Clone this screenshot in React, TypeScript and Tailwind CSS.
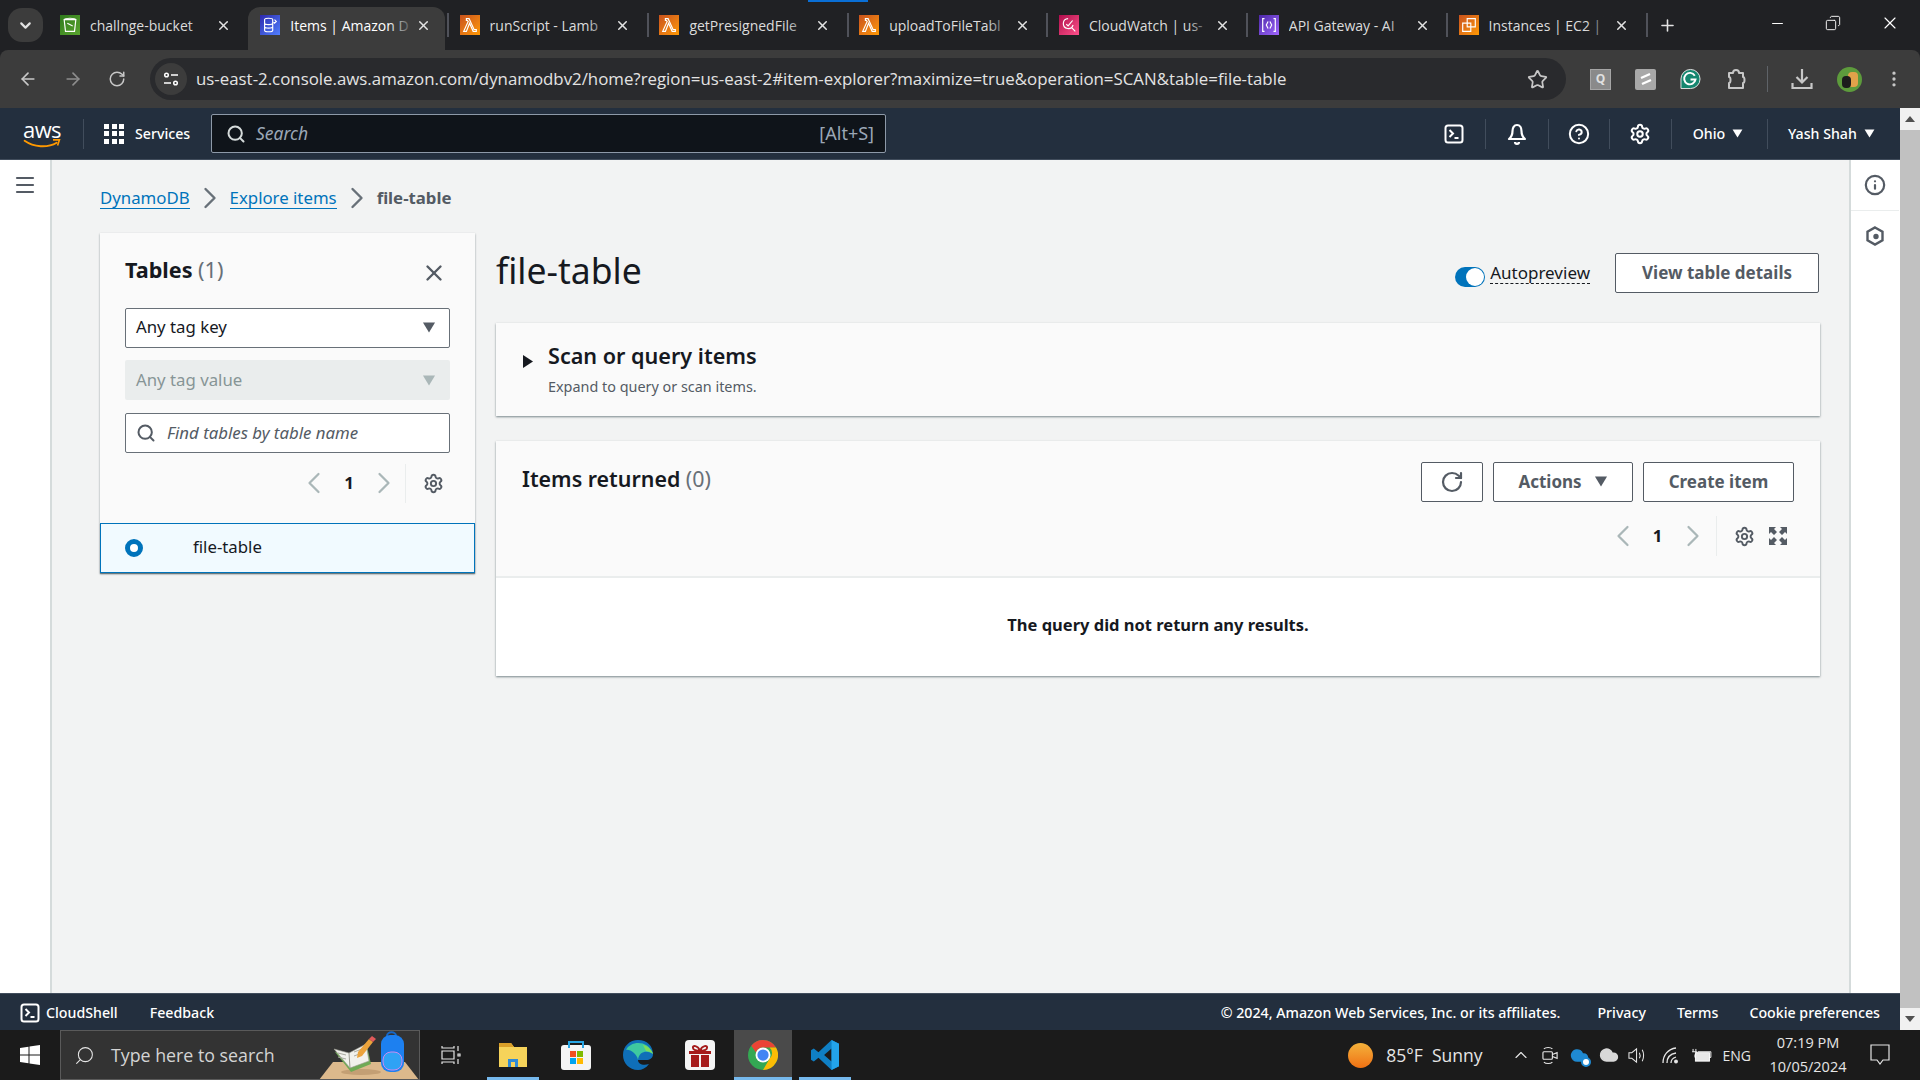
import React from "react";
import {
  ArrowLeft, ArrowRight, ChevronDown, ChevronLeft, ChevronRight, ChevronUp, Menu, Plus,
  RotateCw, Search, Settings, Star, X, CircleHelp, Info, Minus, Copy, Cloud,
  EllipsisVertical,
} from "lucide-react";

const CONSOLE_FONT = "font-['Noto_Sans',sans-serif]";

const Triangle = ({className}: {className: string}) => (
  <svg viewBox="0 0 12 10" className={className} fill="currentColor">
    <path d="M0.5 0.5h11L6 9.5z" />
  </svg>
);

const TerminalIcon = ({className}: {className: string}) => (
  <svg viewBox="0 0 20 20" className={className} fill="none" stroke="currentColor" strokeWidth="2">
    <rect x="1.5" y="1.5" width="17" height="17" rx="2.5" />
    <path d="M5.5 6l3.5 3.5-3.5 3.5M10.5 14h4" />
  </svg>
);

const Favicon = ({bg, kind}: {bg: string; kind: string}) => (
  <span className={`w-5 h-5 shrink-0 flex items-center justify-center ${bg}`}>
    <svg viewBox="0 0 20 20" className="w-[18px] h-[18px]" fill="none" stroke="white" strokeWidth="1.3">
      {kind === "lambda" && <path d="M6 3h3l5.500 12H17v2h-3.500L9.500 8 6 17H3l5-11-1-1H6z" />}
      {kind === "bucket" && <path d="M3.500 4h13l-1.500 13H5zM3.500 4c1-2 12-2 13 0M7 8l6 3" />}
      {kind === "db" && <path d="M4 4c0-2 9-2 9 0v12c0 2-9 2-9 0zM4 8c0 2 9 2 9 0M4 12c0 2 9 2 9 0M15 4l2 2-2 2-1-1" />}
      {kind === "watch" && <path d="M9 3a5.500 5.500 0 105.500 7M13 13l4 4M7 9l2 2 5-6" />}
      {kind === "api" && <path d="M5 3H3v14h2M15 3h2v14h-2M9 6L7 10l2 4M11 6l2 4-2 4" />}
      {kind === "ec2" && <path d="M8 3h9v9H8zM3 8h9v9H3z" />}
    </svg>
  </span>
);

const tabs = [
  {title: "challnge-bucket", bg: "bg-linear-to-br from-[#2f7a1c] to-[#5aa52f]", kind: "bucket"},
  {title: "Items | Amazon D", bg: "bg-linear-to-br from-[#2e27ad] to-[#527fff]", kind: "db", active: true},
  {title: "runScript - Lamb", bg: "bg-linear-to-br from-[#c8511b] to-[#ff9900]", kind: "lambda"},
  {title: "getPresignedFile", bg: "bg-linear-to-br from-[#c8511b] to-[#ff9900]", kind: "lambda"},
  {title: "uploadToFileTabl", bg: "bg-linear-to-br from-[#c8511b] to-[#ff9900]", kind: "lambda"},
  {title: "CloudWatch | us-", bg: "bg-linear-to-br from-[#b0084d] to-[#ff4f8b]", kind: "watch"},
  {title: "API Gateway - AI", bg: "bg-linear-to-br from-[#4d27a8] to-[#a166ff]", kind: "api"},
  {title: "Instances | EC2 |", bg: "bg-linear-to-br from-[#c8511b] to-[#ff9900]", kind: "ec2"},
];

const TabStrip = () => (
  <div className="h-[50px] bg-[#202124] flex items-end relative shrink-0 font-['Open_Sans',sans-serif]">
    <div className="absolute left-[808px] top-0 w-[60px] h-[2px] bg-[#0a6fd6]" />
    <div className="w-[47.5px] h-full flex items-start pt-2 pl-2 shrink-0">
      <div className="w-[35px] h-[34px] rounded-[14px] bg-[#3c3c3c] flex items-center justify-center text-[#e3e3e3]">
        <ChevronDown size={17} strokeWidth={3} />
      </div>
    </div>
    {tabs.map((t, i) => (
      <div
        key={t.title}
        className={`h-[43px] flex items-center gap-[10px] relative shrink-0 pb-[7px] ${t.active ? "ml-[1px] mr-[2px] w-[196.8px] pl-[12px] pr-[14px] rounded-t-[12px] bg-[#3c3c3c] text-white" : "w-[199.8px] pl-[12.5px] pr-[16.5px] text-[#dcdcdc]"} ${i > 1 ? "before:absolute before:left-0 before:top-[6px] before:w-[2px] before:h-[24px] before:bg-[#50525a]" : ""}`}
      >
        <Favicon bg={t.bg} kind={t.kind} />
        <div className="relative flex-1 -mr-[8px] overflow-hidden whitespace-nowrap text-[14px]">
          {t.title}
          <div className={`absolute right-0 top-0 bottom-0 w-[26px] bg-linear-to-r from-transparent ${t.active ? "to-[#3c3c3c]" : "to-[#202124]"}`} />
        </div>
        <X size={15} strokeWidth={2.4} className="shrink-0 text-[#e3e3e3]" />
      </div>
    ))}
    <div className="h-[43px] pb-[7px] pl-[12px] flex items-center text-[#e3e3e3] relative before:absolute before:left-0 before:top-[6px] before:w-[2px] before:h-[24px] before:bg-[#50525a]">
      <Plus size={19} />
    </div>
    <div className="ml-auto h-full flex items-center text-white pr-[20px] gap-[39px] pb-1">
      <Minus size={17} strokeWidth={1.4} />
      <Copy size={16} strokeWidth={1.4} className="-scale-x-100" />
      <X size={20} strokeWidth={1.4} />
    </div>
  </div>
);

const AddressBar = () => (
  <div className="h-[58px] bg-[#3c3c3c] rounded-t-[8px] flex items-center shrink-0 text-[#c7c7c7] font-['Open_Sans',sans-serif]">
    <div className="w-[150px] flex items-center shrink-0 pl-[18px] gap-[25px]">
      <ArrowLeft size={20} />
      <ArrowRight size={20} className="text-[#8d8d8d]" />
      <RotateCw size={18} />
    </div>
    <div className="w-[1416px] h-[42px] bg-[#292a2d] rounded-full flex items-center pl-[5px] pr-[18px] shrink-0">
      <div className="w-[32px] h-[32px] rounded-full bg-[#3c3c3c] flex items-center justify-center">
        <svg viewBox="0 0 16 16" className="w-4 h-4 text-white" fill="none" stroke="currentColor" strokeWidth="1.5">
          <circle cx="3.5" cy="4" r="1.8" />
          <path d="M8 4h7M1 12h7" />
          <circle cx="12.5" cy="12" r="1.8" />
        </svg>
      </div>
      <div className="ml-[9px] text-[16.85px] text-[#e3e3e3] whitespace-nowrap">
        us-east-2.console.aws.amazon.com/dynamodbv2/home?region=us-east-2#item-explorer?maximize=true&amp;operation=SCAN&amp;table=file-table
      </div>
      <Star size={21} className="ml-auto" />
    </div>
    <div className="flex items-center pl-[24px]">
      <span className="w-[21px] h-[21px] bg-[#8a8a8a] border border-[#a5a5a5] text-[#e0e0e0] text-[12px] font-bold flex items-center justify-center">Q</span>
      <span className="ml-[24px] w-[21px] h-[21px] rounded-[2px] bg-[#a8a8a8] flex items-center justify-center">
        <svg viewBox="0 0 14 14" className="w-[14px] h-[14px]" fill="none" stroke="white" strokeWidth="2.4">
          <path d="M2 6l9-4M3 12l9-4" />
        </svg>
      </span>
      <svg viewBox="0 0 22 22" className="ml-[24px] w-[21px] h-[22px]">
        <path d="M11 1a10 10 0 110 20H1v-10A10 10 0 0111 1z" fill="#15866f" stroke="#e8e8e8" strokeWidth="1" />
        <path d="M15.500 7.500a6 6 0 10.800 4H11" fill="none" stroke="white" strokeWidth="2" />
      </svg>
      <svg viewBox="0 0 20 22" className="ml-[25px] w-5 h-[22px]" fill="none" stroke="currentColor" strokeWidth="2">
        <path d="M3 5h4c0-4 6-4 6 0h4v4c2 0 2 6 0 6v5H3v-5c2 0 2-6 0-6z" strokeLinejoin="round" />
      </svg>
      <span className="ml-[21px] w-px h-[26px] bg-[#5f6368]" />
      <svg viewBox="0 0 22 22" className="ml-[23px] w-[22px] h-[22px]" fill="none" stroke="currentColor" strokeWidth="2.2">
        <path d="M11 1v13M5.500 9l5.500 5.500L16.500 9M1.500 15v5h19v-5" />
      </svg>
      <span className="ml-[24px] w-[25px] h-[25px] rounded-full bg-[#5d9b3c] overflow-hidden relative">
        <span className="absolute left-[11px] top-[5px] w-[10px] h-[15px] rounded-[4px] bg-[#e2a24a]" />
        <span className="absolute left-[5px] top-[9px] w-[9px] h-[12px] rounded-[4px] bg-[#1c1c1c]" />
      </span>
      <EllipsisVertical size={20} className="ml-[22px]" />
    </div>
  </div>
);

const NavDivider = () => <span className="w-px h-[30px] bg-[#414d5c]" />;

const TopNav = () => (
  <div className={`h-[52px] bg-[#232f3e] border-b border-b-[#414d5c] flex items-center shrink-0 text-white text-[14.2px] ${CONSOLE_FONT}`}>
    <div className="w-[83px] flex justify-center pl-[1px] shrink-0">
      <div className="relative w-[40px] h-[32px]">
        <div className="text-[22px] leading-[22px] text-center tracking-[-0.6px] font-['Open_Sans',sans-serif]">aws</div>
        <svg viewBox="0 0 40 12" className="absolute left-0 bottom-0 w-[40px] h-[11px]" fill="none">
          <path d="M1 2c10 7 25 8 35 2" stroke="#ff9900" strokeWidth="2" strokeLinecap="round" />
          <path d="M32 1l7 0-2 6" stroke="#ff9900" strokeWidth="1.8" />
        </svg>
      </div>
    </div>
    <NavDivider />
    <div className="grid grid-cols-3 gap-[2.5px] ml-5 w-[20px] shrink-0">
      {Array.from({length: 9}).map((_, i) => (
        <span key={i} className="w-[5px] h-[5px] bg-white" />
      ))}
    </div>
    <div className="ml-[11px] w-[76px] font-medium mt-[1px]">Services</div>
    <div className="w-[675px] h-[39px] bg-[#0f141a] border border-[#8d99a8] rounded-[2px] flex items-center pl-[14px] pr-[11px] text-[#9ba7b6]">
      <Search size={20} strokeWidth={2.4} className="text-[#d5dbdb]" />
      <span className="ml-[10px] italic text-[17.5px]">Search</span>
      <span className="ml-auto text-[18px]">[Alt+S]</span>
    </div>
    <div className="ml-auto flex items-center">
      <div className="w-[62px] flex justify-center"><TerminalIcon className="w-5 h-5" /></div>
      <NavDivider />
      <div className="w-[62px] pr-[1px] flex justify-center">
        <svg viewBox="0 0 20 22" className="w-5 h-[22px]" fill="none" stroke="currentColor" strokeWidth="2.2" strokeLinejoin="round">
          <path d="M10 2c-3 0-4.500 3-4.500 6 0 3-1 6-3.500 8h16c-2.500-2-3.500-5-3.500-8 0-3-1.500-6-4.500-6z" />
          <path d="M8 19c0 2.500 4 2.500 4 0" />
        </svg>
      </div>
      <NavDivider />
      <div className="w-[60px] pr-[1px] flex justify-center"><CircleHelp size={22} strokeWidth={2.2} /></div>
      <NavDivider />
      <div className="w-[61px] pr-[1px] flex justify-center"><Settings size={22} strokeWidth={2.2} /></div>
      <NavDivider />
      <div className="w-[95px] pr-[3px] flex justify-center items-center gap-[7px] font-medium">
        <span className="mt-[1px]">Ohio</span> <Triangle className="w-[11px] h-[9px]" />
      </div>
      <NavDivider />
      <div className="w-[132px] flex items-center gap-[7px] pl-[20px] font-medium">
        <span className="mt-[1px]">Yash Shah</span> <Triangle className="w-[11px] h-[9px]" />
      </div>
    </div>
  </div>
);

const Pager = () => (
  <div className="flex items-center">
    <ChevronLeft size={36} strokeWidth={1.5} className="text-[#aab7b8]" />
    <span className="w-[34px] text-center font-bold text-[16.8px] text-[#16191f]">1</span>
    <ChevronRight size={36} strokeWidth={1.5} className="text-[#aab7b8]" />
  </div>
);

const Button = ({children, className}: {children: React.ReactNode; className: string}) => (
  <div className={`h-[40px] pb-[1px] bg-white border border-[#545b64] rounded-[2px] flex items-center justify-center font-bold text-[17px] text-[#545b64] ${className}`}>
    {children}
  </div>
);

const TablesPanel = () => (
  <div className="w-[375px] shrink-0 bg-[#fafafa] shadow-[0_1px_2px_rgba(0,28,36,0.4)]">
    <div className="px-[25px] pt-[10px]">
      <div className="flex items-center justify-between h-[55px]">
        <div className="text-[21.6px] font-bold text-[#16191f]">
          Tables <span className="font-normal text-[#687078]">(1)</span>
        </div>
        <X size={26} strokeWidth={2.2} className="text-[#545b64] mr-[3px] mt-[5px]" />
      </div>
      <div className="mt-[10px] h-[40px] pb-[2px] bg-white border border-[#687078] rounded-[2px] flex items-center px-[10px] text-[16.8px] text-[#16191f]">
        Any tag key
        <Triangle className="ml-auto mr-[3px] w-[14px] h-[11px] text-[#545b64]" />
      </div>
      <div className="mt-[12px] h-[40px] bg-[#eaeded] rounded-[2px] flex items-center px-[11px] text-[16.8px] text-[#879596]">
        Any tag value
        <Triangle className="ml-auto mr-[3px] w-[14px] h-[11px] text-[#aab7b8]" />
      </div>
      <div className="mt-[13px] h-[40px] bg-white border border-[#687078] rounded-[2px] flex items-center px-[10px] text-[16.8px] italic text-[#545b64]">
        <Search size={20} strokeWidth={2.4} className="text-[#545b64]" />
        <span className="ml-[11px]">Find tables by table name</span>
      </div>
      <div className="flex items-center justify-end mt-[10px] h-[40px]">
        <Pager />
        <span className="w-px h-[39px] bg-[#eaeded] ml-[3px]" />
        <Settings size={21} strokeWidth={2.2} className="text-[#545b64] ml-[17px] mr-[6px]" />
      </div>
    </div>
    <div className="mt-[20px] h-[50px] pb-[2px] bg-[#f1faff] border border-[#0073bb] shadow-[0_1px_1px_rgba(0,28,36,0.4)] flex items-center pl-[24px] text-[16.8px] text-[#16191f]">
      <span className="w-[18px] h-[18px] mt-[2px] rounded-full border-[5px] border-[#0073bb] bg-white" />
      <span className="ml-[50px]">file-table</span>
    </div>
  </div>
);

const MainPanel = () => (
  <div className="flex-1 min-w-0 ml-[21px]">
    <div className="h-[90px] flex items-center pb-[10px]">
      <h1 className="text-[35.5px] text-[#16191f] leading-none -mt-[5px]">file-table</h1>
      <div className="ml-auto flex items-center">
        <span className="w-[30px] h-[20px] rounded-full bg-[#0073bb] relative mt-[7px] mr-[5px]">
          <span className="absolute right-[1px] top-[1px] w-[18px] h-[18px] rounded-full bg-white" />
        </span>
        <span className="text-[17px] text-[#16191f] border-b border-dashed border-[#16191f] leading-[21px] -mt-[1px]">Autopreview</span>
      </div>
      <Button className="w-[204px] ml-[25px] mr-[1px]">View table details</Button>
    </div>
    <div className="h-[93px] bg-[#fafafa] shadow-[0_1px_2px_rgba(0,28,36,0.5)] flex pl-[27px] pt-[19px]">
      <svg viewBox="0 0 10 13" className="w-[10px] h-[13px] mt-[13px] text-[#16191f]" fill="currentColor">
        <path d="M0 0l10 6.500-10 6.500z" />
      </svg>
      <div className="ml-[15px]">
        <div className="text-[21.6px] leading-[27px] font-semibold text-[#16191f]">Scan or query items</div>
        <div className="text-[14.4px] leading-[20px] mt-[8px] text-[#545b64]">Expand to query or scan items.</div>
      </div>
    </div>
    <div className="mt-[25px] bg-[#fafafa] shadow-[0_1px_2px_rgba(0,28,36,0.5)]">
      <div className="h-[137px] px-[26px] pt-[21px] border-b-2 border-b-[#eaeded] relative">
        <div className="flex items-start">
          <div className="text-[21.4px] font-semibold text-[#16191f] leading-[27px] mt-[3px]">
            Items returned <span className="font-normal text-[#687078]">(0)</span>
          </div>
          <div className="ml-auto flex gap-[10px]">
            <Button className="w-[62px]"><RotateCw size={24} strokeWidth={2.2} /></Button>
            <Button className="w-[140px] gap-[12px]">Actions <Triangle className="w-[14px] h-[11px]" /></Button>
            <Button className="w-[151px]">Create item</Button>
          </div>
        </div>
        <div className="flex items-center justify-end mt-[14px] h-[40px]">
          <Pager />
          <span className="w-px h-[40px] bg-[#eaeded] ml-[5px]" />
          <Settings size={21} strokeWidth={2.2} className="text-[#545b64] ml-[17px]" />
          <svg viewBox="0 0 18 18" className="w-[18px] h-[18px] ml-[14.500px] mr-[7px] text-[#545b64]" fill="currentColor">
            <path d="M0 0h7L5 2l3 3-3 3-3-3-2 2zM18 0v7l-2-2-3 3-3-3 3-3-2-2zM0 18v-7l2 2 3-3 3 3-3 3 2 2zM18 18h-7l2-2-3-3 3-3 3 3 2-2z" />
          </svg>
        </div>
      </div>
      <div className="h-[98px] pb-[3px] bg-white flex items-center justify-center font-bold text-[16.5px] text-[#16191f]">
        The query did not return any results.
      </div>
    </div>
  </div>
);

const BreadcrumbSep = () => (
  <ChevronRight size={36} strokeWidth={1.6} className="text-[#687078] mx-[2px]" />
);

const Content = () => (
  <div className={`flex-1 min-h-0 bg-[#f2f3f3] flex ${CONSOLE_FONT}`}>
    <div className="w-[52px] shrink-0 bg-white border-r-2 border-r-[#d5dbdb] flex justify-center pt-[13px]">
      <Menu size={24} strokeWidth={2.2} className="text-[#545b64]" />
    </div>
    <div className="flex-1 min-w-0 pl-[48px] pr-[29px]">
      <div className="h-[73px] flex items-center text-[16.8px] pt-[2px]">
        <span className="text-[#0073bb] border-b border-[#0073bb] leading-[21px]">DynamoDB</span>
        <BreadcrumbSep />
        <span className="text-[#0073bb] border-b border-[#0073bb] leading-[21px]">Explore items</span>
        <BreadcrumbSep />
        <span className="font-bold text-[#545b64]">file-table</span>
      </div>
      <div className="flex items-start">
        <TablesPanel />
        <MainPanel />
      </div>
    </div>
    <div className="w-[51px] pr-[1px] shrink-0 bg-white border-l-2 border-l-[#d5dbdb] flex flex-col items-center">
      <div className="h-[51px] w-full border-b border-b-[#eaeded] flex justify-center pt-[14px]">
        <Info size={22} strokeWidth={2.4} className="text-[#545b64]" />
      </div>
      <svg viewBox="0 0 20 20" className="w-5 h-5 mt-[15px] text-[#545b64]" fill="none" stroke="currentColor" strokeWidth="2.4">
        <path d="M10 1.500l7.500 4.200v8.600L10 18.500l-7.500-4.200V5.700z" />
        <circle cx="11" cy="10.500" r="1.500" fill="currentColor" />
      </svg>
    </div>
  </div>
);

const Footer = () => (
  <div className={`h-[37px] bg-[#232f3e] border-t border-t-[#414d5c] flex items-center shrink-0 text-white text-[14.2px] font-medium pl-[20px] pr-[20px] pt-[1px] ${CONSOLE_FONT}`}>
    <TerminalIcon className="w-5 h-5" />
    <span className="ml-[6px]">CloudShell</span>
    <span className="ml-[32px]">Feedback</span>
    <span className="ml-auto">© 2024, Amazon Web Services, Inc. or its affiliates.</span>
    <span className="ml-[37px]">Privacy</span>
    <span className="ml-[31px]">Terms</span>
    <span className="ml-[31px]">Cookie preferences</span>
  </div>
);

const Scrollbar = () => (
  <div className="w-5 shrink-0 bg-[#f1f1f1] flex flex-col items-center">
    <div className="h-[22px] flex items-center text-[#505050]"><svg viewBox="0 0 10 6" className="w-[10px] h-[6px]" fill="currentColor"><path d="M5 0l5 6H0z" /></svg></div>
    <div className="flex-1 w-full bg-[#c1c1c1]" />
    <div className="h-[22px] flex items-center text-[#505050]"><svg viewBox="0 0 10 6" className="w-[10px] h-[6px]" fill="currentColor"><path d="M0 0h10L5 6z" /></svg></div>
  </div>
);

const TaskIcon = ({children, active, highlight}: {children: React.ReactNode; active?: boolean; highlight?: boolean}) => (
  <div className="w-[62.4px] h-full flex items-center justify-center relative shrink-0">
    {highlight && <div className="absolute inset-y-0 inset-x-[2px] bg-[#4a4a4a]" />}
    <div className="relative flex">{children}</div>
    {active && <div className={`absolute bottom-0 h-[3px] bg-[#76b9ed] ${highlight ? "inset-x-[2px]" : "inset-x-[5px]"}`} />}
  </div>
);

const Taskbar = () => (
  <div className="h-[50px] bg-[#1b1b1b] flex items-center shrink-0 text-[#e6e6e6] font-['Open_Sans',sans-serif]">
    <div className="w-[60px] shrink-0 flex justify-center">
      <svg viewBox="0 0 20 20" className="w-5 h-5 text-white" fill="currentColor">
        <path d="M0 3l8.500-1.200V9.500H0zM9.500 1.600L20 0v9.500H9.500zM0 10.500h8.500v7.700L0 17zM9.500 10.500H20V20L9.500 18.400z" />
      </svg>
    </div>
    <div className="w-[360px] h-full bg-[#333333] border border-[#5a5a5a] flex items-center pl-[13px] shrink-0 relative overflow-hidden">
      <Search size={21} strokeWidth={1.2} className="-scale-x-100" />
      <span className="ml-[16px] text-[17.8px] text-[#d4d4d4]">Type here to search</span>
      <svg viewBox="0 0 100 50" className="ml-auto w-[100px] h-[50px] shrink-0">
        <path d="M0 50l14-18h72l14 18z" fill="#dcb98c" />
        <ellipse cx="42" cy="42" rx="20" ry="3" fill="#c39f74" />
        <path d="M16 22l14 3 18-9 4 18-20 8z" fill="#6faa55" />
        <path d="M15 19l15 4 17-9 3 17-19 7z" fill="#f1f1ec" stroke="#9a9a90" strokeWidth="0.6" />
        <path d="M30 23l1 15" stroke="#9a9a90" strokeWidth="1" />
        <path d="M19 23l8 2M19 27l8 2M35 22l8-3M35 26l8-3" stroke="#a9a9a0" strokeWidth="1" />
        <path d="M39 22l11-13 4 3-11 14-5 2z" fill="#eba33b" />
        <path d="M50 9l3-3 4 3-3 3z" fill="#e05a5a" />
        <path d="M68 6c0-5 9-5 9 0" fill="none" stroke="#1668c9" strokeWidth="2" />
        <rect x="62" y="5" width="23" height="37" rx="9" fill="#1d80f0" />
        <rect x="64" y="22" width="19" height="18" rx="8" fill="#2fa2f5" stroke="#c98cf0" strokeWidth="1" />
      </svg>
    </div>
    <div className="w-[62px] flex justify-center shrink-0">
      <svg viewBox="0 0 20 20" className="w-5 h-5" fill="none" stroke="currentColor" strokeWidth="1.2">
        <path d="M1 1v2h12V1M1 6h12v8H1zM1 19v-2h12v2M17 1v5M17 9h2v2h-2zM17 14v5" />
      </svg>
    </div>
    <TaskIcon active>
      <svg viewBox="0 0 28 24" className="w-[28px] h-[24px]"><path d="M0 0h12l3 4h13v20H0z" fill="#f6d35a" /><path d="M0 0h12l3 4H0z" fill="#d99f29" /><path d="M9 24v-8h10v8h-3v-5h-4v5z" fill="#2f8bd6" /></svg>
    </TaskIcon>
    <TaskIcon>
      <svg viewBox="0 0 30 30" className="w-[30px] h-[30px]"><rect y="5" width="30" height="25" rx="3" fill="#f4f4f4" /><path d="M8 8V2h14v6" fill="none" stroke="#27a5e4" strokeWidth="2" /><path d="M9 11h6v6H9z" fill="#f25022" /><path d="M16 11h6v6h-6z" fill="#7fba00" /><path d="M9 18h6v6H9z" fill="#00a4ef" /><path d="M16 18h6v6h-6z" fill="#ffb900" /></svg>
    </TaskIcon>
    <TaskIcon>
      <svg viewBox="0 0 30 30" className="w-[30px] h-[30px]"><path d="M0 15C0 6 7 0 15 0c9 0 15 6 15 14 0 4-3 6-7 6h-8c0 4 5 6 11 4-3 4-7 6-11 6C6 30 0 23 0 15z" fill="#0f6fb8" /><path d="M3 10c4-9 22-11 27 4-3-3-14-5-15 6-1-6-8-11-12-10z" fill="#3ec9a0" /><path d="M20 5c5 1 9 5 10 9-2-2-5-3-7-3z" fill="#7fdc5a" /></svg>
    </TaskIcon>
    <TaskIcon>
      <svg viewBox="0 0 30 30" className="w-[30px] h-[30px]"><rect width="30" height="30" rx="4" fill="#f5f5f5" /><path d="M4 11h22v3H4zM6 15h8v12H6zM16 15h8v12h-8z" fill="#a61b1b" /><path d="M15 11c-2-6-8-6-7-3 0 2 4 3 7 3zm0 0c2-6 8-6 7-3 0 2-4 3-7 3z" fill="none" stroke="#a61b1b" strokeWidth="2" /></svg>
    </TaskIcon>
    <TaskIcon active highlight>
      <svg viewBox="0 0 32 32" className="w-[30px] h-[30px]">
        <circle cx="16" cy="16" r="16" fill="#34a853" />
        <path d="M16 0A16 16 0 0129.860 8H16a8 8 0 00-7.500 5.200L3.500 6A16 16 0 0116 0z" fill="#ea4335" />
        <path d="M29.860 8A16 16 0 0116 32l7-12a8 8 0 000-12z" fill="#fbbc05" />
        <circle cx="16" cy="16" r="8" fill="#fff" />
        <circle cx="16" cy="16" r="6" fill="#4285f4" />
      </svg>
    </TaskIcon>
    <TaskIcon active>
      <svg viewBox="0 0 30 32" className="w-[28px] h-[30px]">
        <path d="M22 0l8 4v24l-8 4-14-13-5 4-3-2V11l3-2 5 4zM22 9l-8 7 8 7z" fill="#0f7fc4" />
        <path d="M22 0l8 4v24l-8 4z" fill="#23a3ea" />
      </svg>
    </TaskIcon>
    <div className="ml-auto flex items-center h-full text-[#e6e6e6]">
      <span className="w-[25px] h-[25px] rounded-full bg-linear-to-b from-[#f3b13a] to-[#ef7011]" />
      <span className="ml-[13px] text-[17.5px] whitespace-nowrap">85°F&nbsp; Sunny</span>
      <ChevronUp size={20} strokeWidth={1.4} className="ml-[28px]" />
      <svg viewBox="0 0 18 20" className="ml-[11px] w-[17px] h-[19px]" fill="none" stroke="currentColor" strokeWidth="1.2">
        <path d="M2 3c2-2 7-2 9 0M2 17c2 2 7 2 9 0" />
        <rect x="1" y="6" width="10" height="8" rx="1" />
        <path d="M11 9l5-2v6l-5-2" />
      </svg>
      <span className="relative ml-[11px] flex">
        <Cloud size={19} fill="#1f8ad2" stroke="#1f8ad2" />
        <span className="absolute right-[-2px] bottom-[-2px] w-[10px] h-[10px] rounded-full bg-white border-2 border-[#1f8ad2]" />
      </span>
      <Cloud size={20} fill="#d8d8d8" stroke="#d8d8d8" className="ml-[10px]" />
      <svg viewBox="0 0 20 20" className="ml-[9px] w-[19px] h-[19px]" fill="none" stroke="currentColor" strokeWidth="1.1">
        <path d="M1 7h3l5-4v14l-5-4H1z" />
        <path d="M12 7c1 2 1 4 0 6M15 4c2 4 2 8 0 12" />
      </svg>
      <svg viewBox="0 0 18 18" className="ml-[14px] w-[18px] h-[18px]" fill="none" stroke="currentColor" strokeWidth="1.3">
        <path d="M2 17C2 9 7 3 15 2M6 17c0-5 3-9 9-10M10 17c0-3 2-5 5-6" />
        <circle cx="15" cy="15.500" r="1.300" fill="currentColor" />
      </svg>
      <svg viewBox="0 0 22 16" className="ml-[12px] w-[21px] h-[15px]" fill="none" stroke="white" strokeWidth="1">
        <path d="M2 1v3M5 1v3M1 4h5v3H4v3h17v-6H7" />
        <rect x="4.500" y="5" width="15" height="9" fill="#e8e8e8" />
      </svg>
      <span className="ml-[11px] text-[14px]">ENG</span>
      <div className="ml-[15px] w-[84px] text-center text-[14.5px] leading-[24px]">
        <div>07:19 PM</div>
        <div>10/05/2024</div>
      </div>
      <svg viewBox="0 0 20 22" className="ml-[20px] mr-[30px] w-5 h-[22px]" fill="none" stroke="currentColor" strokeWidth="1.2">
        <path d="M1 1h18v15h-6l-3 4-3-4H1z" />
      </svg>
    </div>
  </div>
);

const App = () => (
  <div className="w-[1920px] h-[1080px] flex flex-col overflow-hidden bg-[#202124]">
    <TabStrip />
    <AddressBar />
    <div className="flex-1 min-h-0 flex">
      <div className="flex-1 min-w-0 flex flex-col">
        <TopNav />
        <Content />
        <Footer />
      </div>
      <Scrollbar />
    </div>
    <Taskbar />
  </div>
);

export default App;
